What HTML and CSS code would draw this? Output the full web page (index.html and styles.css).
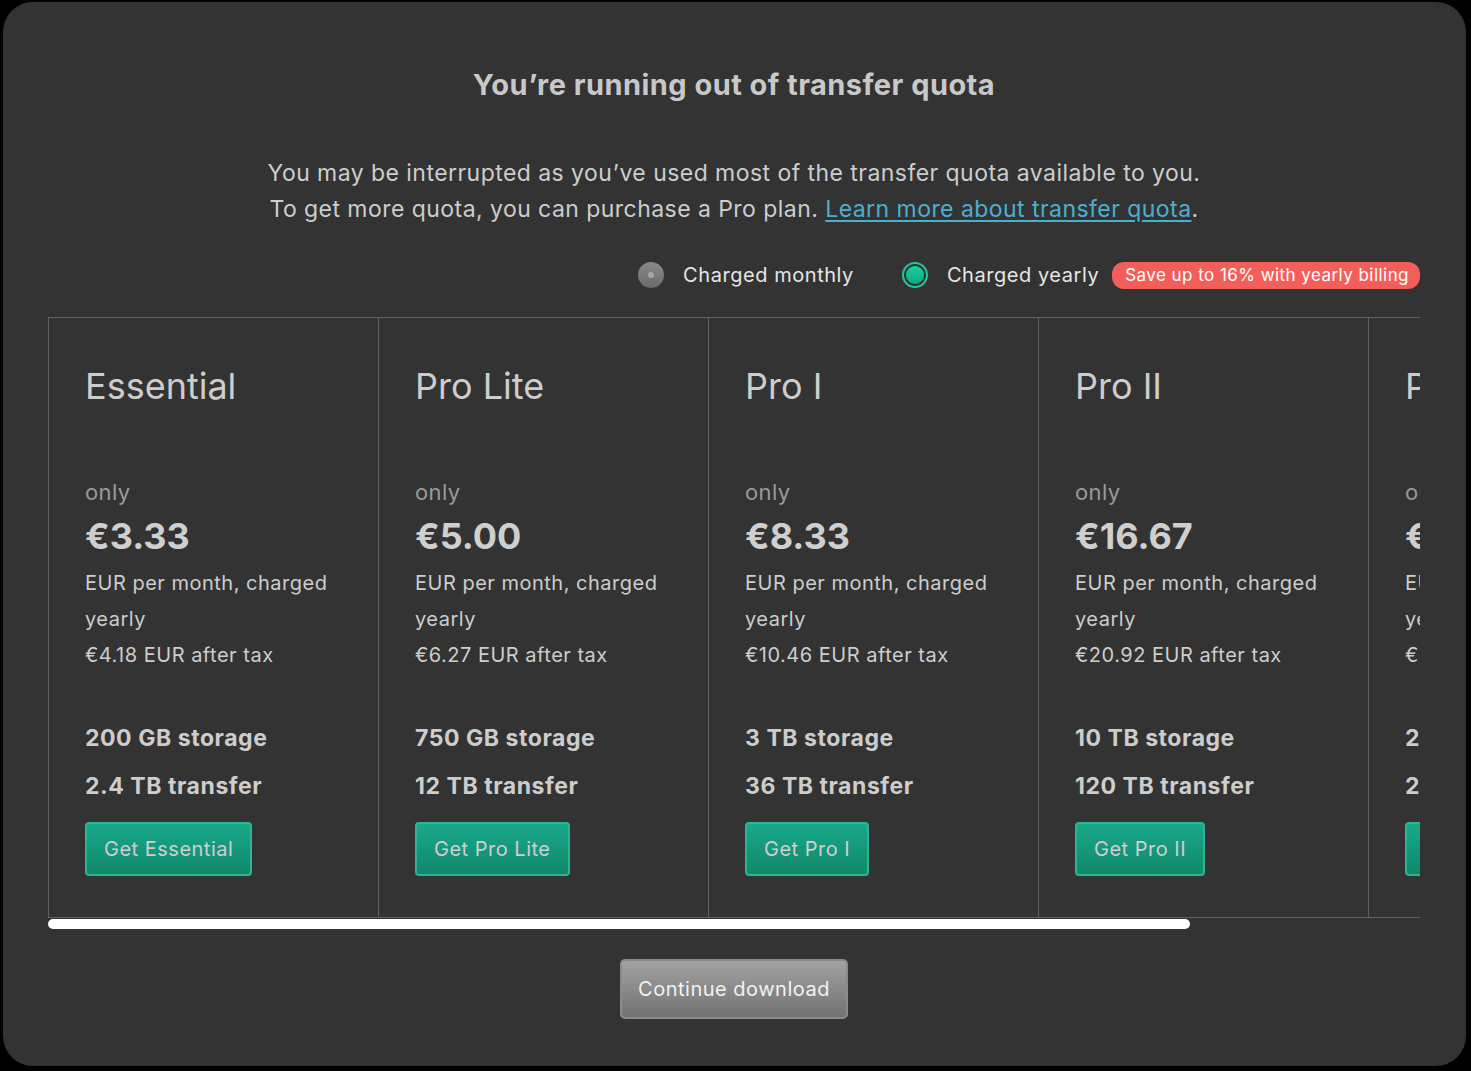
FILE: index.html
```html
<!DOCTYPE html>
<html lang="en">
<head>
<meta charset="utf-8">
<title>Transfer quota</title>
<link rel="stylesheet" href="styles.css">
</head>
<body>
<div class="modal">
  <h1 class="title">You’re running out of transfer quota</h1>
  <p class="intro">You may be interrupted as you’ve used most of the transfer quota available to you.<br>To get more quota, you can purchase a Pro plan. <a href="#" class="link">Learn more about transfer quota</a>.</p>
  <div class="billing">
    <label class="opt"><span class="radio radio-off"></span><span class="opt-label">Charged monthly</span></label>
    <label class="opt opt-year"><span class="radio radio-on"></span><span class="opt-label">Charged yearly</span></label>
    <span class="badge">Save up to 16% with yearly billing</span>
  </div>
  <div class="plans">
    <div class="plans-row">
      <div class="plan">
        <div class="plan-name">Essential</div>
        <div class="only">only</div>
        <div class="price">€3.33</div>
        <div class="per">EUR per month, charged yearly</div>
        <div class="tax">€4.18 EUR after tax</div>
        <div class="feat">200 GB storage</div>
        <div class="feat">2.4 TB transfer</div>
        <button class="buy">Get Essential</button>
      </div>
      <div class="plan">
        <div class="plan-name">Pro Lite</div>
        <div class="only">only</div>
        <div class="price">€5.00</div>
        <div class="per">EUR per month, charged yearly</div>
        <div class="tax">€6.27 EUR after tax</div>
        <div class="feat">750 GB storage</div>
        <div class="feat">12 TB transfer</div>
        <button class="buy">Get Pro Lite</button>
      </div>
      <div class="plan">
        <div class="plan-name">Pro I</div>
        <div class="only">only</div>
        <div class="price">€8.33</div>
        <div class="per">EUR per month, charged yearly</div>
        <div class="tax">€10.46 EUR after tax</div>
        <div class="feat">3 TB storage</div>
        <div class="feat">36 TB transfer</div>
        <button class="buy">Get Pro I</button>
      </div>
      <div class="plan">
        <div class="plan-name">Pro II</div>
        <div class="only">only</div>
        <div class="price">€16.67</div>
        <div class="per">EUR per month, charged yearly</div>
        <div class="tax">€20.92 EUR after tax</div>
        <div class="feat">10 TB storage</div>
        <div class="feat">120 TB transfer</div>
        <button class="buy">Get Pro II</button>
      </div>
      <div class="plan">
        <div class="plan-name">Pro III</div>
        <div class="only">only</div>
        <div class="price">€25.00</div>
        <div class="per">EUR per month, charged yearly</div>
        <div class="tax">€31.36 EUR after tax</div>
        <div class="feat">20 TB storage</div>
        <div class="feat">240 TB transfer</div>
        <button class="buy">Get Pro III</button>
      </div>
    </div>
  </div>
  <div class="scrollbar"><div class="scroll-thumb"></div></div>
  <div class="actions">
    <button class="continue">Continue download</button>
  </div>
</div>
</body>
</html>
```
FILE: styles.css
```css
html, body {
  margin: 0;
  padding: 0;
  background: #000;
  height: 100%;
}
body {
  font-family: Inter, "Noto Sans", "Liberation Sans", sans-serif;
  color: #cfcfcf;
  overflow: hidden;
}
.modal {
  margin: 2px 5px 0 3px;
  height: 1064px;
  box-sizing: border-box;
  background: #333333;
  border-radius: 30px;
  padding: 64px 46px 0 45px;
  display: flex;
  flex-direction: column;
}
.title {
  margin: 0;
  text-align: center;
  font-size: 29px;
  font-weight: 700;
  line-height: 38px;
  color: #c8c8c8;
  letter-spacing: 0.45px;
}
.intro {
  margin: 51px 0 0;
  text-align: center;
  font-size: 23px;
  line-height: 36px;
  color: #cdcdcd;
  letter-spacing: 0.45px;
}
.link {
  color: #4eaed0;
  text-decoration: underline;
  text-underline-offset: 3px;
}
.billing {
  margin-top: 33px;
  display: flex;
  justify-content: flex-end;
  align-items: center;
  height: 30px;
}
.opt {
  display: flex;
  align-items: center;
  gap: 19px;
  font-size: 20px;
  color: #e6e6e6;
  letter-spacing: 0.55px;
}
.opt-year {
  margin-left: 48px;
}
.radio {
  width: 26px;
  height: 26px;
  border-radius: 50%;
  box-sizing: border-box;
  position: relative;
  flex: none;
}
.radio-off {
  background: linear-gradient(#8a8a8a, #6a6a6a);
}
.radio-off::after {
  content: "";
  position: absolute;
  width: 6px;
  height: 6px;
  border-radius: 50%;
  background: #a5a5a5;
  left: 10px;
  top: 10px;
}
.radio-on {
  border: 2px solid #1ec79d;
  background: #333;
}
.radio-on::after {
  content: "";
  position: absolute;
  left: 2px;
  top: 2px;
  width: 18px;
  height: 18px;
  border-radius: 50%;
  background: linear-gradient(#14d3a2, #0ea882);
}
.badge {
  margin-left: 13px;
  background: #f25f5a;
  color: #fff;
  font-size: 17px;
  line-height: 27px;
  padding: 0 11px 0 13px;
  border-radius: 12px;
  letter-spacing: 0.45px;
}
.plans {
  margin-top: 27px;
  overflow: hidden;
}
.plans-row {
  display: grid;
  grid-auto-flow: column;
  grid-auto-columns: 330px;
  width: max-content;
  border-top: 1px solid #616161;
  border-bottom: 1px solid #616161;
}
.plan {
  border-left: 1px solid #616161;
  padding: 46px 30px 41px 36px;
  display: flex;
  flex-direction: column;
  align-items: flex-start;
}
.plan:last-child {
  border-right: 1px solid #616161;
}
.plan-name {
  font-size: 36px;
  line-height: 44px;
  color: #cdcdcd;
  height: 112px;
}
.only {
  font-size: 22px;
  line-height: 32px;
  color: #9a9a9a;
  letter-spacing: 0.4px;
}
.price {
  font-size: 36px;
  font-weight: 700;
  line-height: 57px;
  color: #cfcfcf;
}
.per, .tax {
  font-size: 20px;
  line-height: 36px;
  color: #cdcdcd;
  letter-spacing: 0.5px;
}
.tax {
  margin-bottom: 41px;
}
.feat {
  font-size: 23px;
  font-weight: 700;
  line-height: 48px;
  color: #cdcdcd;
  letter-spacing: 0.55px;
}
.buy {
  margin-top: 12px;
  font-family: inherit;
  font-size: 20px;
  color: #cfcfcf;
  background: linear-gradient(#18a98a, #12876a);
  border: 2px solid #2bb495;
  border-radius: 4px;
  height: 54px;
  padding: 0 17px;
  letter-spacing: 0.5px;
}
.scrollbar {
  margin-top: 1px;
  height: 10px;
}
.scroll-thumb {
  width: 1142px;
  height: 10px;
  background: #fff;
  border-radius: 5px;
}
.actions {
  display: flex;
  justify-content: center;
  margin-top: 30px;
}
.continue {
  font-family: inherit;
  font-size: 20px;
  color: #f2f2f2;
  background: linear-gradient(#a2a2a2, #727272);
  border: 2px solid #8a8a8a;
  border-radius: 5px;
  height: 60px;
  padding: 0 16px;
  letter-spacing: 0.5px;
}
```
